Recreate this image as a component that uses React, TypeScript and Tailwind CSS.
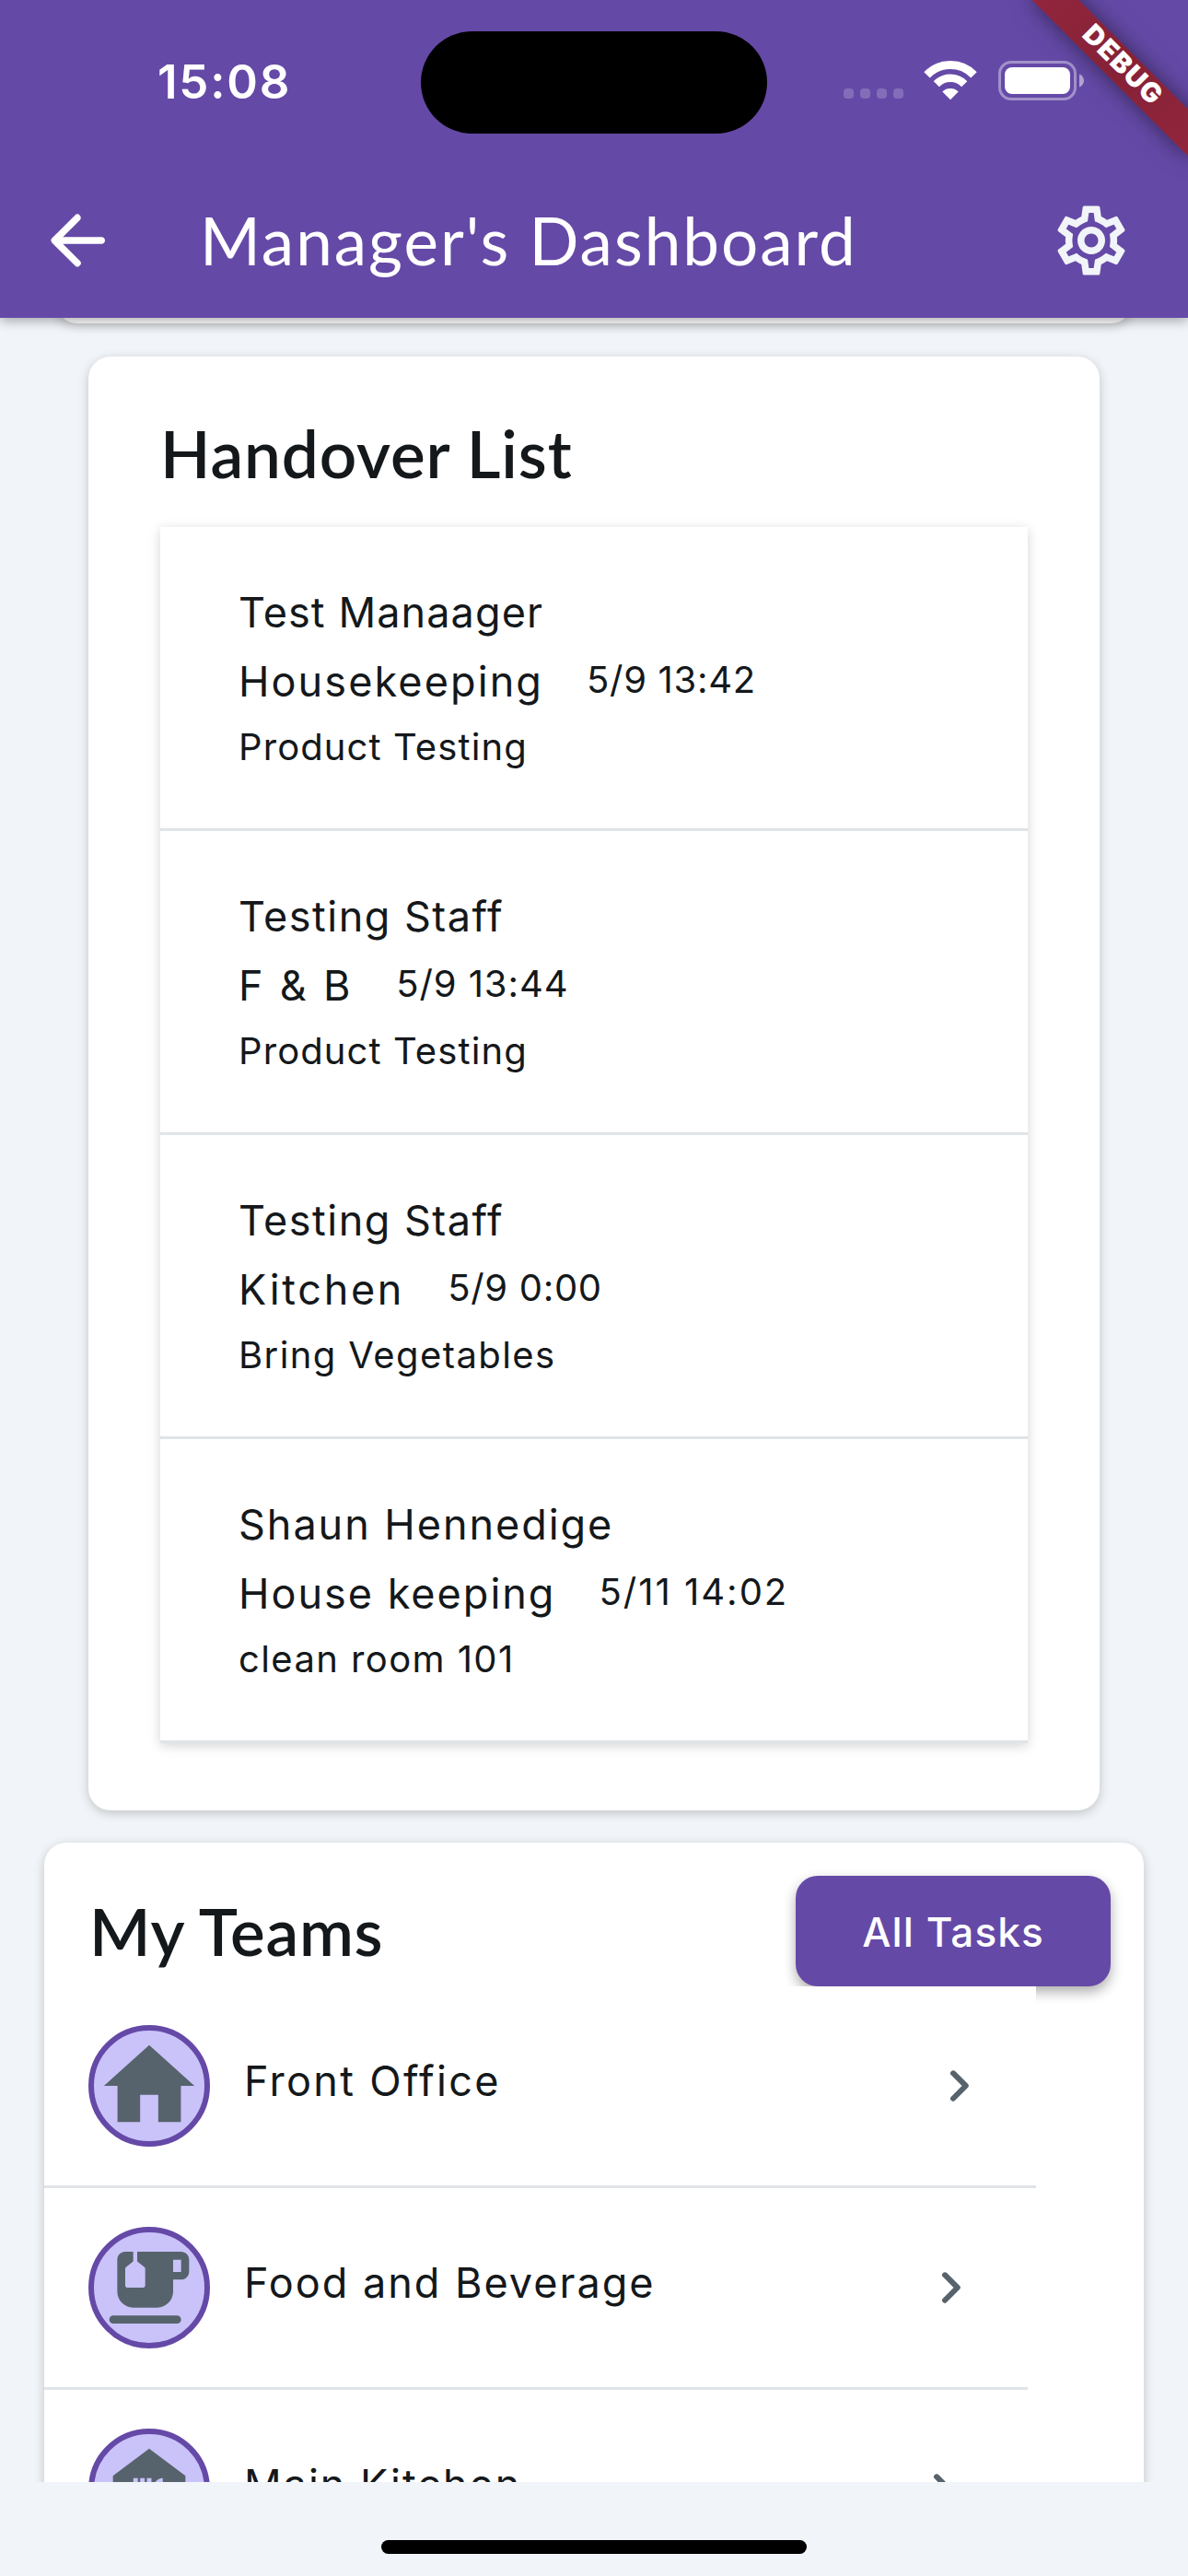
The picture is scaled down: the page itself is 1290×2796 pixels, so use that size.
import React from "react";
import { MdFoodBank, MdOutlineSettings } from "react-icons/md";

const handovers = [
  {
    name: "Test Manaager",
    nameClass: "tracking-[1.1px]",
    dept: "Housekeeping",
    deptClass: "tracking-[2.1px]",
    time: "5/9 13:42",
    timeClass: "tracking-[0.7px]",
    note: "Product Testing",
    noteClass: "tracking-[1.1px]",
  },
  {
    name: "Testing Staff",
    nameClass: "tracking-[1.5px]",
    dept: "F & B",
    deptClass: "tracking-[2.8px]",
    time: "5/9 13:44",
    timeClass: "tracking-[0.9px]",
    note: "Product Testing",
    noteClass: "tracking-[1.1px]",
  },
  {
    name: "Testing Staff",
    nameClass: "tracking-[1.5px]",
    dept: "Kitchen",
    deptClass: "tracking-[2.7px]",
    time: "5/9 0:00",
    timeClass: "tracking-[0.7px]",
    note: "Bring Vegetables",
    noteClass: "tracking-[1.4px]",
  },
  {
    name: "Shaun Hennedige",
    nameClass: "tracking-[1.95px]",
    dept: "House keeping",
    deptClass: "tracking-[2px]",
    time: "5/11 14:02",
    timeClass: "tracking-[2px]",
    note: "clean room 101",
    noteClass: "tracking-[1.4px]",
  },
];

function WifiIcon() {
  return (
    <svg width="58" height="43" viewBox="0 0 58 43" fill="none">
      <path d="M3.5 15.3A35.5 35.5 0 0 1 54.5 15.3" stroke="white" strokeWidth="9" />
      <path d="M13.8 25.2A21.2 21.2 0 0 1 44.2 25.2" stroke="white" strokeWidth="8.6" />
      <path d="M29 42.2 20.3 33.4A12.6 12.6 0 0 1 37.7 33.4Z" fill="white" />
    </svg>
  );
}

function BatteryIcon() {
  return (
    <svg width="93" height="43" viewBox="0 0 93 43" fill="none">
      <rect x="1.5" y="1.5" width="82" height="40" rx="12.5" stroke="white" strokeOpacity=".4" strokeWidth="3" />
      <rect x="7" y="7" width="71" height="29" rx="8" fill="white" />
      <path d="M88 14.5c3 1 5 3.800 5 7s-2 6-5 7z" fill="white" fillOpacity=".5" />
    </svg>
  );
}

function StatusBar() {
  return (
    <div className="relative flex h-[177px] items-center pl-[171px]">
      <span className="w-[286px] text-[51px] font-semibold leading-none tracking-[1.8px]">15:08</span>
      <div className="mt-px h-[111px] w-[376px] rounded-full bg-black" />
      <div className="ml-[83px] mt-[26px] flex gap-[7px]">
        <i className="size-[11px] rounded-[4px] bg-white/20" />
        <i className="size-[11px] rounded-[4px] bg-white/20" />
        <i className="size-[11px] rounded-[4px] bg-white/20" />
        <i className="size-[11px] rounded-[4px] bg-white/20" />
      </div>
      <div className="ml-[22px] mt-[-3px] flex gap-[23px]">
        <WifiIcon />
        <BatteryIcon />
      </div>
      <div className="absolute right-0 top-0 size-[300px] overflow-hidden">
        <div className="absolute left-[108px] top-[54px] h-[36px] w-[240px] rotate-45 bg-linear-to-r from-[#91263d] via-[#862136] to-[#91263d] text-center text-[29.5px] font-black leading-[31px] tracking-[1.3px] shadow-[0_0_24px_rgba(0,0,0,0.5)]">
          DEBUG
        </div>
      </div>
    </div>
  );
}

function Header() {
  return (
    <header className="relative z-10 h-[345px] shrink-0 bg-[#6549a7] text-white shadow-[0_3px_12px_rgba(0,0,0,0.33)]">
      <StatusBar />
      <div className="flex h-[168px] items-center pl-[39px] pr-[60px]">
        <svg width="90" height="90" viewBox="0 0 24 24" fill="currentColor">
          <path d="M19 11H7.830l4.880-4.880c.39-.39.39-1.030 0-1.420a.996.996 0 0 0-1.410 0l-6.590 6.590a.996.996 0 0 0 0 1.410l6.590 6.590a.996.996 0 1 0 1.410-1.410L7.830 13H19c.55 0 1-.45 1-1s-.45-1-1-1z" />
        </svg>
        <h1 className="ml-[88px] flex-1 font-['Lato',sans-serif] text-[71px] leading-[84px] tracking-[2px]">
          Manager's Dashboard
        </h1>
        <MdOutlineSettings className="size-[90px] text-[#f1f4f8]" />
      </div>
    </header>
  );
}

function HandoverCard() {
  return (
    <section className="mx-24 mt-[36px] h-[1578px] rounded-3xl bg-white px-[78px] pt-[63px] shadow-[0_3px_12px_rgba(0,0,0,0.2)]">
      <h2 className="font-['Lato',sans-serif] text-[71px] font-semibold leading-[84px] tracking-[0.9px]">Handover List</h2>
      <ul className="mt-[38px] shadow-[0_3px_12px_rgba(0,0,0,0.17)]">
        {handovers.map((h, i) => (
          <li key={i} className="h-[330px] border-b-[3px] border-[#e0e3e7] bg-white pl-[85px] pt-14">
            <p className={`text-[45px] leading-[74px] ${h.nameClass}`}>{h.name}</p>
            <div className="flex h-[76px] items-start gap-[47px]">
              <span className={`text-[45px] leading-[75px] ${h.deptClass}`}>{h.dept}</span>
              <span className={`text-[40px] leading-[72px] ${h.timeClass}`}>{h.time}</span>
            </div>
            <p className={`text-[40px] leading-[65px] ${h.noteClass}`}>{h.note}</p>
          </li>
        ))}
      </ul>
    </section>
  );
}

function TeamRow({
  label,
  rowClass,
  labelClass,
  children,
}: {
  label: string;
  rowClass: string;
  labelClass: string;
  children: React.ReactNode;
}) {
  return (
    <li className={`relative flex h-[219px] items-center border-b-[3px] border-[#e0e3e7] bg-white pl-12 pr-12 ${rowClass}`}>
      <div className="flex size-[132px] items-center justify-center rounded-full border-[6px] border-[#6549a7] bg-[#c9c3fa] text-[#57636c]">
        {children}
      </div>
      <span className={`mb-[10px] ml-[37px] flex-1 text-[45px] leading-[52px] ${labelClass}`}>{label}</span>
      <svg className="text-[#57636c]" width="72" height="72" viewBox="0 0 24 24" fill="currentColor">
        <path d="M9.290 6.710a.996.996 0 0 0 0 1.410L13.170 12l-3.880 3.880a.996.996 0 1 0 1.410 1.410l4.590-4.590a.996.996 0 0 0 0-1.410L10.700 6.700c-.38-.38-1.020-.38-1.410.01z" />
      </svg>
    </li>
  );
}

function TeamsCard() {
  return (
    <section className="mx-12 mt-[35px] h-[900px] rounded-3xl bg-white shadow-[0_3px_12px_rgba(0,0,0,0.2)]">
      <div className="flex items-start justify-between pl-[49px] pr-9 pt-9">
        <h2 className="mt-[18px] font-['Lato',sans-serif] text-[71px] font-semibold leading-[84px] tracking-[0.7px]">My Teams</h2>
        <button className="h-[120px] w-[342px] rounded-3xl bg-[#6549a7] pt-[2px] text-[44px] font-medium tracking-[1.1px] text-white shadow-[0_6px_14px_rgba(0,0,0,0.33)]">
          All Tasks
        </button>
      </div>
      <ul>
        <TeamRow label="Front Office" rowClass="w-[1077px]" labelClass="tracking-[2.3px]">
          <svg className="shrink-0" width="118" height="118" viewBox="0 0 24 24" fill="currentColor">
            <path d="M10 20v-6h4v6h5v-8h3L12 3 2 12h3v8z" />
          </svg>
        </TeamRow>
        <TeamRow label="Food and Beverage" rowClass="w-[1068px]" labelClass="tracking-[2px]">
          <svg className="shrink-0" width="104" height="104" viewBox="0 0 24 24" fill="currentColor">
            <path d="M20 3H9v2.400l1.810 1.450c.12.09.19.24.19.39v4.260c0 .28-.22.5-.5.5h-4c-.28 0-.5-.22-.5-.5V7.240c0-.15.07-.3.19-.39L8 5.400V3H6C4.900 3 4 3.900 4 5v8c0 2.210 1.790 4 4 4h6c2.210 0 4-1.790 4-4v-3h2c1.100 0 2-.9 2-2V5c0-1.100-.9-2-2-2zm0 5.100h-2V5h2zM3 19h16c.55 0 1 .45 1 1s-.45 1-1 1H3c-.55 0-1-.45-1-1s.45-1 1-1z" />
          </svg>
        </TeamRow>
        <TeamRow label="Main Kitchen" rowClass="w-[1059px]" labelClass="tracking-[2px]">
          <MdFoodBank className="size-[118px] shrink-0" />
        </TeamRow>
      </ul>
    </section>
  );
}

export default function App() {
  return (
    <div className="flex h-[2796px] w-[1290px] flex-col overflow-hidden bg-[#f1f4f8] font-['Inter',sans-serif] text-[#14181b]">
      <Header />
      <main className="h-[2349px] shrink-0 overflow-hidden">
        <div className="mx-[60px] -mt-[60px] h-[66px] rounded-3xl bg-white shadow-[0_3px_12px_rgba(0,0,0,0.2)]" />
        <HandoverCard />
        <TeamsCard />
      </main>
      <div className="flex flex-1 justify-center pt-[63px]">
        <div className="h-[15px] w-[462px] rounded-full bg-black" />
      </div>
    </div>
  );
}
